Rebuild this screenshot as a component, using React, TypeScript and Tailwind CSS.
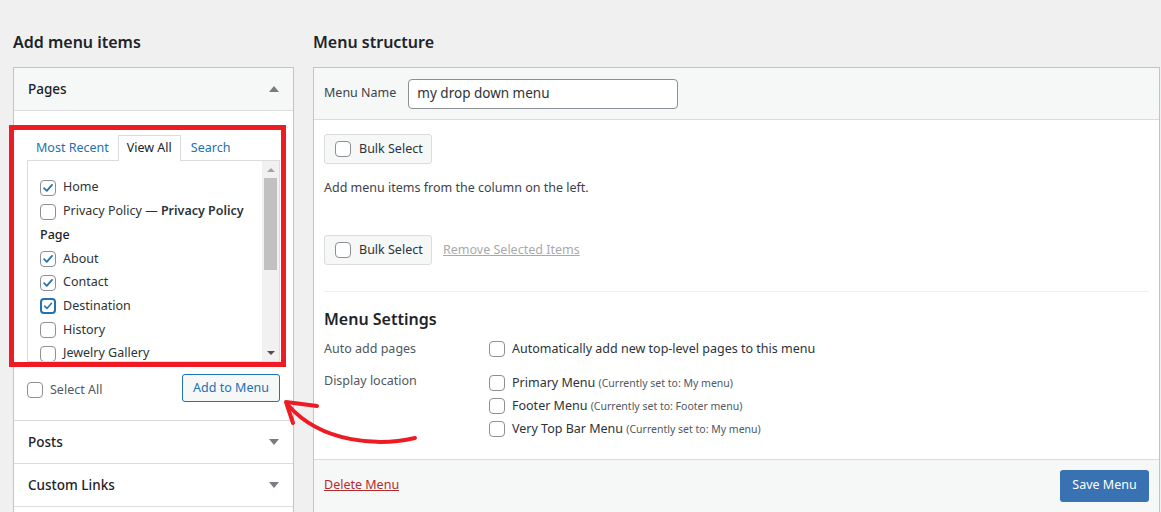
import React from 'react';

const FONT = "font-['Noto_Sans',sans-serif]";

function Box({ checked = false, focus = false }: { checked?: boolean; focus?: boolean }) {
  return (
    <span
      className={`inline-flex h-4 w-4 shrink-0 items-center justify-center rounded-[4px] bg-white ${
        focus ? 'border-2 border-[#2271b1]' : 'border border-[#8c8f94]'
      }`}
    >
      {checked && (
        <svg viewBox="0 0 16 16" className="h-[14px] w-[14px]">
          <path d="M3.5 8.2 L6.6 11.2 L12.6 4.4" fill="none" stroke="#2271b1" strokeWidth="2" strokeLinecap="round" strokeLinejoin="round" />
        </svg>
      )}
    </span>
  );
}

function Tri({ up = false }: { up?: boolean }) {
  return (
    <svg viewBox="0 0 10 6" className="h-[6px] w-[10px]">
      <path d={up ? 'M0 6 L5 0 L10 6 Z' : 'M0 0 L10 0 L5 6 Z'} fill="#787c82" />
    </svg>
  );
}

const PAGES = [
  { label: 'Home', checked: true },
  { label: 'Privacy Policy', extra: 'Privacy Policy' },
  { heading: 'Page' },
  { label: 'About', checked: true },
  { label: 'Contact', checked: true },
  { label: 'Destination', checked: true, focus: true },
  { label: 'History' },
  { label: 'Jewelry Gallery' },
];

function BulkButton() {
  return (
    <div className="flex h-[30px] w-[108px] items-center gap-2 rounded-[3px] border border-[#dcdcde] bg-[#f6f7f7] pl-[10px] text-[#2c3338]">
      <Box />
      <span>Bulk Select</span>
    </div>
  );
}

export default function App() {
  return (
    <div className={`relative h-[512px] w-[1161px] overflow-hidden bg-[#f0f0f1] text-[12.5px] text-[#1d2327] ${FONT}`}>
      <div className="flex gap-[19px] pl-[13px] pr-px pt-[30px]">
        {/* Left column */}
        <div className="w-[281px] shrink-0">
          <h2 className="mb-[13px] h-6 text-[16px] font-semibold leading-6">Add menu items</h2>
          <div className="border border-[#c3c4c7] bg-white">
            <div className="flex h-[43px] items-center justify-between border-b border-[#dcdcde] bg-[#f6f7f7] pl-[14px] pr-[14px] text-[13.5px] font-medium">
              <span>Pages</span>
              <Tri up />
            </div>
            <div className="px-[13px] pt-[24px] pb-[18px]">
              {/* Tabs */}
              <div className="relative z-10 -mb-px flex h-[26px] items-stretch">
                <span className="flex items-center px-[9px] text-[#2271b1]">Most Recent</span>
                <span className="flex items-center border border-b-0 border-[#dcdcde] bg-white px-[8px] text-[#1d2327]">View All</span>
                <span className="ml-px flex items-center px-[9px] text-[#2271b1]">Search</span>
              </div>
              <div className="flex h-[202px] border border-[#dcdcde] bg-white">
                <div className="flex-1 overflow-hidden pl-[12px] pt-[15px]">
                  {PAGES.map((p, i) =>
                    p.heading ? (
                      <div key={i} className="flex h-[23.7px] items-center font-medium">
                        {p.heading}
                      </div>
                    ) : (
                      <div key={i} className="flex h-[23.7px] items-center gap-[7px] text-[#2c3338]">
                        <Box checked={p.checked} focus={p.focus} />
                        <span>
                          {p.label}
                          {p.extra && (
                            <>
                              {' — '}
                              <span className="font-semibold">{p.extra}</span>
                            </>
                          )}
                        </span>
                      </div>
                    )
                  )}
                </div>
                {/* scrollbar */}
                <div className="flex w-[17px] flex-col items-center bg-[#f1f1f1]">
                  <div className="flex h-[17px] items-center justify-center">
                    <svg viewBox="0 0 8 4" className="h-1 w-2">
                      <path d="M0 4 L4 0 L8 4 Z" fill="#a3a3a3" />
                    </svg>
                  </div>
                  <div className="h-[92px] w-[13px] bg-[#c1c1c1]" />
                  <div className="flex-1" />
                  <div className="flex h-[17px] items-center justify-center">
                    <svg viewBox="0 0 8 4" className="h-1 w-2">
                      <path d="M0 0 L8 0 L4 4 Z" fill="#505050" />
                    </svg>
                  </div>
                </div>
              </div>
              <div className="mt-[12px] flex items-center justify-between">
                <label className="mt-[4px] flex items-center gap-[7px] text-[#50575e]">
                  <Box />
                  <span>Select All</span>
                </label>
                <button className="h-[28px] w-[98px] rounded-[3px] border border-[#2271b1] bg-[#f6f7f7] text-[12.5px] text-[#2271b1]">
                  Add to Menu
                </button>
              </div>
            </div>
            {['Posts', 'Custom Links', 'Categories'].map((t) => (
              <div key={t} className="flex h-[43px] items-center justify-between border-t border-[#dcdcde] pl-[14px] pr-[14px] text-[13.5px] font-medium">
                <span>{t}</span>
                <Tri />
              </div>
            ))}
          </div>
        </div>

        {/* Right column */}
        <div className="flex-1">
          <h2 className="mb-[13px] h-6 text-[16px] font-semibold leading-6">Menu structure</h2>
          <div className="border border-[#c3c4c7] bg-white">
            <div className="flex h-[52px] items-center border-b border-[#dcdcde] bg-[#f6f7f7] px-[10px]">
              <span className="mr-[12px] text-[#3c434a]">Menu Name</span>
              <div className="flex h-[30px] w-[270px] items-center rounded-[4px] border border-[#8c8f94] bg-white px-[8px] text-[13.5px] text-[#2c3338]">
                my drop down menu
              </div>
            </div>
            <div className="px-[10px] pt-[14px]">
              <BulkButton />
              <p className="mt-[14px] leading-[20px] text-[#3c434a]">Add menu items from the column on the left.</p>
              <div className="mt-[37px] flex items-center gap-[11px]">
                <BulkButton />
                <span className="text-[#a7aaad] underline">Remove Selected Items</span>
              </div>
              <div className="mt-[26px] border-t border-[#f0f0f1]" />
              <h3 className="mt-[15px] text-[16px] font-semibold leading-6">Menu Settings</h3>
              <div className="mt-[9px] flex">
                <div className="w-[165px] text-[#50575e]">Auto add pages</div>
                <label className="flex items-center gap-[7px] text-[#2c3338]">
                  <Box />
                  <span>Automatically add new top-level pages to this menu</span>
                </label>
              </div>
              <div className="mt-[13px] flex pb-[20px]">
                <div className="w-[165px] text-[#50575e]">Display location</div>
                <div className="flex flex-col gap-[4px] pt-[2px]">
                  {[
                    ['Primary Menu', 'My menu'],
                    ['Footer Menu', 'Footer menu'],
                    ['Very Top Bar Menu', 'My menu'],
                  ].map(([n, c]) => (
                    <label key={n} className="flex h-[19px] items-center gap-[7px] text-[#2c3338]">
                      <Box />
                      <span>
                        {n} <span className="text-[10.5px] text-[#50575e]">(Currently set to: {c})</span>
                      </span>
                    </label>
                  ))}
                </div>
              </div>
            </div>
            <div className="flex h-[53px] items-center justify-between border-t border-[#dcdcde] bg-[#f6f7f7] px-[10px]">
              <span className="text-[#b32d2e] underline">Delete Menu</span>
              <button className="h-[32px] w-[89px] rounded-[3px] bg-[#3872b2] text-[12.5px] text-white">Save Menu</button>
            </div>
          </div>
        </div>
      </div>

      {/* annotation overlay */}
      <div className="pointer-events-none absolute left-[9px] top-[125px] h-[242px] w-[277px] border-[5px] border-[#ed1c24]" />
      <svg className="pointer-events-none absolute left-0 top-0" width="1161" height="512">
        <path d="M415 438 C 380 446, 322 444, 288 405" fill="none" stroke="#ed1c24" strokeWidth="4" strokeLinecap="round" />
        <path d="M317 406 L286 402 L293 423" fill="none" stroke="#ed1c24" strokeWidth="4" strokeLinecap="round" strokeLinejoin="round" />
      </svg>
    </div>
  );
}
